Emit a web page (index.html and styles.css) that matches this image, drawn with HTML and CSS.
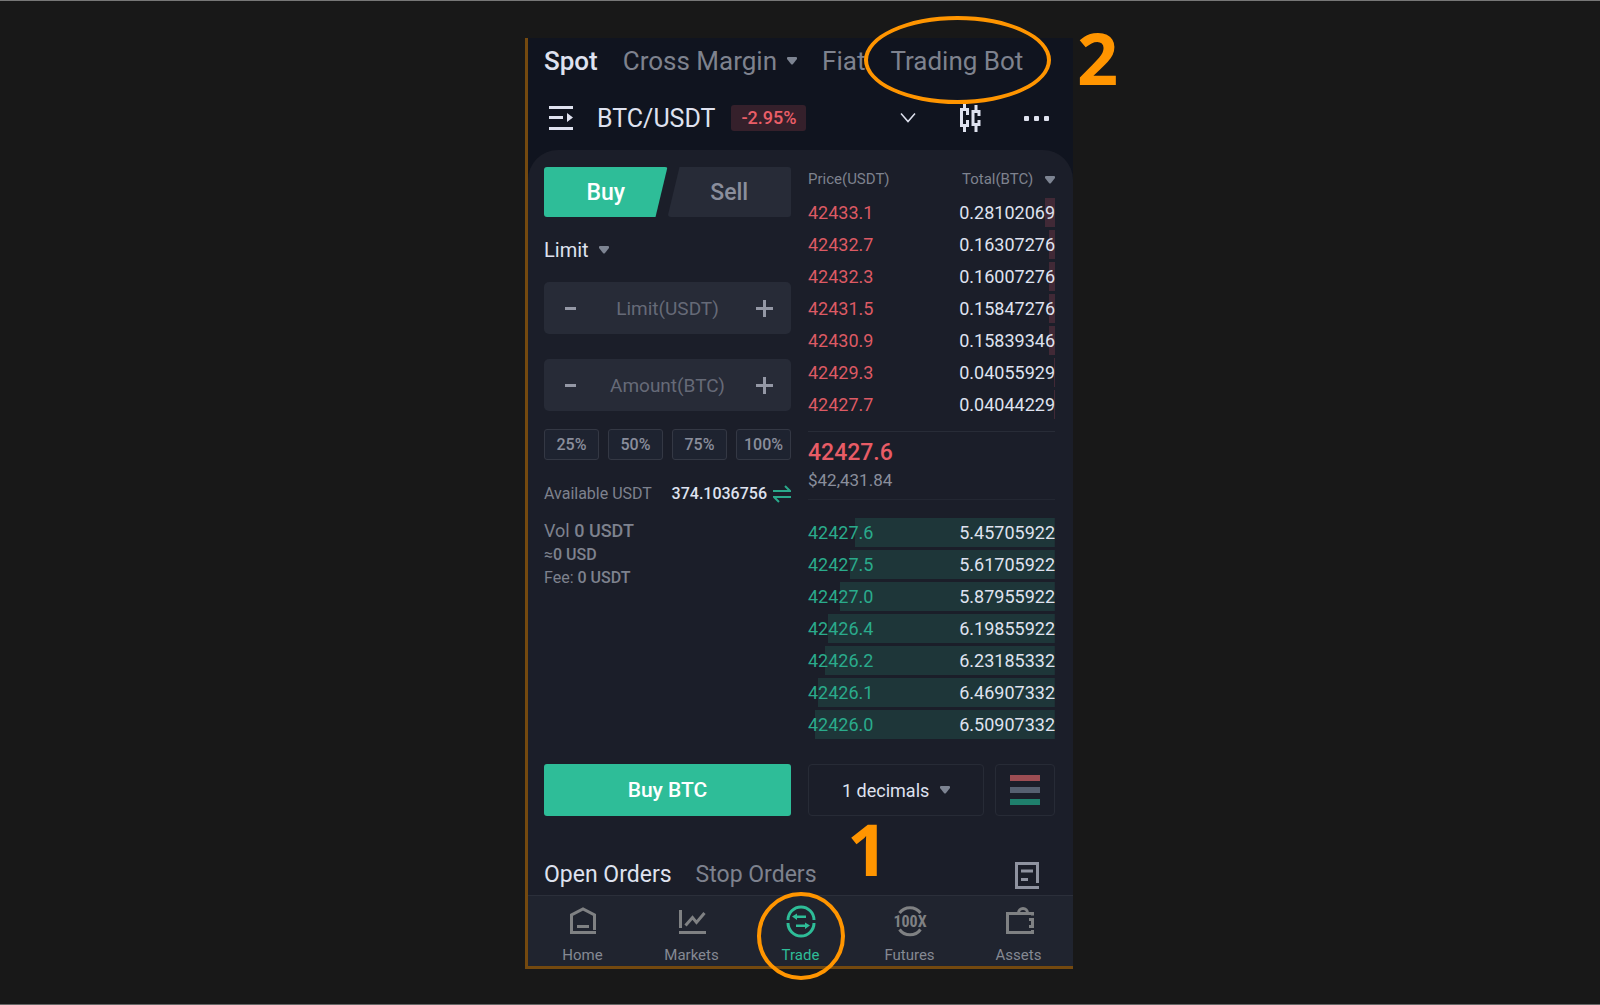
FILE: index.html
```html
<!DOCTYPE html>
<html lang="en">
<head>
<meta charset="utf-8">
<meta name="viewport" content="width=device-width, initial-scale=1">
<title>Spot trading BTC/USDT</title>
<link rel="stylesheet" href="styles.css">
</head>
<body>
<main class="phone">
  <header class="top">
    <nav class="modes" aria-label="Trading modes">
      <a href="#spot" class="mode active">Spot</a>
      <a href="#margin" class="mode">Cross Margin <svg class="caret" viewBox="0 0 10 8" aria-hidden="true"><path d="M1 0h8q1 0 1 1v1L6 7q-1 1-2 0L0 2V1q0-1 1-1z"/></svg></a>
      <a href="#fiat" class="mode">Fiat</a>
      <a href="#bot" class="mode">Trading Bot</a>
    </nav>
    <div class="pair">
      <button class="icon-btn" aria-label="Markets list"><svg width="24" height="24" viewBox="0 0 24 24" fill="currentColor"><path d="M0 0h24v3H0zM0 10h14v3H0zM0 21h24v3H0zM18 7l6 4.500-6 4.500z"/></svg></button>
      <h1 class="pair-name">BTC/USDT</h1>
      <span class="change">-2.95%</span>
      <div class="pair-tools">
        <button class="icon-btn" aria-label="More details"><svg width="16" height="12" viewBox="0 0 16 12" fill="none" stroke="currentColor" stroke-width="1.500"><path d="M1 1.500l7 8 7-8"/></svg></button>
        <button class="icon-btn" aria-label="Chart"><svg width="24" height="28" viewBox="0 0 24 28" fill="none" stroke="currentColor" stroke-width="3"><path d="M6.500 0v6M6.500 21v7M11 5.500H3.500v16H11M9.500 5v6M9.500 16v6M18 1v6M18 21v7M22.500 7.500H15v13h7.500M21 7v5M21 16v5"/></svg></button>
        <button class="icon-btn" aria-label="More"><svg width="26" height="6" viewBox="0 0 26 6" fill="currentColor"><rect x="0" y="1" width="5" height="5" rx="1"/><rect x="10" y="1" width="5" height="5" rx="1"/><rect x="20" y="1" width="5" height="5" rx="1"/></svg></button>
      </div>
    </div>
  </header>

  <section class="panel">
    <div class="columns">
      <form class="ticket">
        <div class="sides">
          <button type="button" class="side buy">Buy</button>
          <button type="button" class="side sell">Sell</button>
        </div>
        <div class="picker order-type">
          <select aria-label="Order type"><option>Limit</option></select>
          <svg class="caret" viewBox="0 0 10 8" aria-hidden="true"><path d="M1 0h8q1 0 1 1v1L6 7q-1 1-2 0L0 2V1q0-1 1-1z"/></svg>
        </div>
        <div class="stepper">
          <button type="button" aria-label="Decrease limit"><svg width="17" height="17" viewBox="0 0 17 17"><path d="M3 7h11v3H3z"/></svg></button>
          <input type="text" placeholder="Limit(USDT)" aria-label="Limit (USDT)">
          <button type="button" aria-label="Increase limit"><svg width="17" height="17" viewBox="0 0 17 17"><path d="M7 0h3v7h7v3h-7v7H7v-7H0V7h7z"/></svg></button>
        </div>
        <div class="stepper">
          <button type="button" aria-label="Decrease amount"><svg width="17" height="17" viewBox="0 0 17 17"><path d="M3 7h11v3H3z"/></svg></button>
          <input type="text" placeholder="Amount(BTC)" aria-label="Amount (BTC)">
          <button type="button" aria-label="Increase amount"><svg width="17" height="17" viewBox="0 0 17 17"><path d="M7 0h3v7h7v3h-7v7H7v-7H0V7h7z"/></svg></button>
        </div>
        <div class="shares">
          <button type="button">25%</button>
          <button type="button">50%</button>
          <button type="button">75%</button>
          <button type="button">100%</button>
        </div>
        <div class="available">
          <span>Available USDT</span>
          <strong>374.1036756</strong>
          <button type="button" class="icon-btn transfer" aria-label="Transfer"><svg width="18" height="18" viewBox="0 0 18 18" fill="none" stroke="currentColor" stroke-width="2"><path d="M0 6h17L12 1M18 12H1l5 5"/></svg></button>
        </div>
        <div class="totals">
          <p class="vol">Vol <b>0 USDT</b></p>
          <p>≈<b>0 USD</b></p>
          <p>Fee: <b>0 USDT</b></p>
        </div>
        <button type="submit" class="submit">Buy BTC</button>
      </form>

      <div class="book">
        <table class="orders asks">
          <thead>
            <tr><th>Price(USDT)</th><th>Total(BTC) <svg class="caret" viewBox="0 0 10 8" aria-hidden="true"><path d="M1 0h8q1 0 1 1v1L6 7q-1 1-2 0L0 2V1q0-1 1-1z"/></svg></th></tr>
          </thead>
          <tbody>
            <tr style="--depth:10px"><td>42433.1</td><td>0.28102069</td></tr>
            <tr style="--depth:6px"><td>42432.7</td><td>0.16307276</td></tr>
            <tr style="--depth:6px"><td>42432.3</td><td>0.16007276</td></tr>
            <tr style="--depth:6px"><td>42431.5</td><td>0.15847276</td></tr>
            <tr style="--depth:6px"><td>42430.9</td><td>0.15839346</td></tr>
            <tr style="--depth:1px"><td>42429.3</td><td>0.04055929</td></tr>
            <tr style="--depth:1px"><td>42427.7</td><td>0.04044229</td></tr>
          </tbody>
        </table>
        <div class="last">
          <p class="last-price">42427.6</p>
          <p class="last-usd">$42,431.84</p>
        </div>
        <table class="orders bids">
          <tbody>
            <tr style="--depth:81%"><td>42427.6</td><td>5.45705922</td></tr>
            <tr style="--depth:83%"><td>42427.5</td><td>5.61705922</td></tr>
            <tr style="--depth:87%"><td>42427.0</td><td>5.87955922</td></tr>
            <tr style="--depth:92%"><td>42426.4</td><td>6.19855922</td></tr>
            <tr style="--depth:93%"><td>42426.2</td><td>6.23185332</td></tr>
            <tr style="--depth:96%"><td>42426.1</td><td>6.46907332</td></tr>
            <tr style="--depth:97%"><td>42426.0</td><td>6.50907332</td></tr>
          </tbody>
        </table>
        <div class="book-options">
          <div class="picker decimals">
            <select aria-label="Price decimals"><option>1 decimals</option></select>
            <svg class="caret" viewBox="0 0 10 8" aria-hidden="true"><path d="M1 0h8q1 0 1 1v1L6 7q-1 1-2 0L0 2V1q0-1 1-1z"/></svg>
          </div>
          <button class="layout-btn" aria-label="Order book layout"><svg width="30" height="30" viewBox="0 0 30 30"><path fill="#9c4d53" d="M0 0h30v6H0z"/><path fill="#566070" d="M0 12h30v6H0z"/><path fill="#1f7f6c" d="M0 24h30v6H0z"/></svg></button>
        </div>
      </div>
    </div>

    <div class="order-tabs">
      <a href="#open" class="active">Open Orders</a>
      <a href="#stop">Stop Orders</a>
      <button class="icon-btn history" aria-label="Order history"><svg width="24" height="27" viewBox="0 0 24 27" fill="none" stroke="currentColor" stroke-width="3"><path d="M22.500 21V1.500h-21v24H24M6 9h12M6 17.500h7"/></svg></button>
    </div>
  </section>

  <nav class="dock" aria-label="Main">
    <a href="#home"><svg width="30" height="30" viewBox="0 0 30 30" fill="none" stroke="currentColor" stroke-width="3"><path d="M28 26.500H3.500V9L15 3l11.500 6v15M9 20.500h12"/></svg>Home</a>
    <a href="#markets"><svg width="30" height="30" viewBox="0 0 30 30" fill="none" stroke="currentColor" stroke-width="3"><path d="M3.500 4v18M2 26.500h27M8.500 19.500l7-8 4 5L27.500 7"/></svg>Markets</a>
    <a href="#trade" class="active"><svg width="30" height="30" viewBox="0 0 30 30" fill="none" stroke="currentColor" stroke-width="3"><path d="M2 14A13 13 0 0 1 28 14M28 17A13 13 0 0 1 2 17"/><path fill="currentColor" stroke="none" d="M11 7.500v2h9v2.500h-9v2L6 10.500zM19 16.500v2h-9V21h9v2l5-3.500z"/></svg>Trade</a>
    <a href="#futures"><svg width="30" height="30" viewBox="0 0 30 30" fill="none" stroke="currentColor" stroke-width="3"><path d="M4.500 7A13 13 0 0 1 25.500 7M25.500 23.500A13 13 0 0 1 4.500 23.500"/><text class="lever" x="15" y="21" text-anchor="middle" fill="currentColor" stroke="none">100X</text></svg>Futures</a>
    <a href="#assets"><svg width="30" height="30" viewBox="0 0 30 30" fill="none" stroke="currentColor" stroke-width="3"><path d="M28.500 9.500V7.500h-25v19h25V24M25 13.500h3.500v7H25M14.500 7a4.500 4.500 0 0 1 9 0"/></svg>Assets</a>
  </nav>

  <div class="ring ring-bot"></div>
  <span class="step step-bot">2</span>
  <div class="ring ring-trade"></div>
  <span class="step step-trade">1</span>
</main>
</body>
</html>
```

FILE: styles.css
```css
* {
  box-sizing: border-box;
}

body {
  margin: 0;
  min-height: 100vh;
  padding: 37px 2px 34px 0;
  background: #181818;
  border-top: 1px solid #777;
  border-bottom: 1px solid #666;
  font-family: Roboto, "Liberation Sans", sans-serif;
  color: #dfe2ef;
}

h1,
p {
  margin: 0;
  font-weight: 400;
}

a {
  color: inherit;
  text-decoration: none;
}

button,
input,
select {
  font: inherit;
  color: inherit;
  background: none;
  border: 0;
  padding: 0;
  margin: 0;
}

svg {
  display: block;
}

.phone {
  position: relative;
  width: 100%;
  max-width: 548px;
  margin: 0 auto;
  background: #10141f;
  border-left: 3px solid #74490f;
  border-bottom: 3px solid #74490f;
}

.caret {
  display: inline-block;
  flex: none;
  width: 10px;
  height: 8px;
  fill: #7d8492;
}

.icon-btn {
  display: flex;
  align-items: center;
  justify-content: center;
}

/* Mode tabs and pair header */
.top {
  padding: 3px 23px 2px 16px;
}

.modes {
  display: flex;
  gap: 25px;
  font-size: 26px;
  line-height: 40px;
  color: #7e828e;
  white-space: nowrap;
}

.mode {
  display: flex;
  align-items: center;
  gap: 10px;
}

.active {
  color: #dfe2ef;
}

.mode.active {
  font-weight: 500;
}

.pair {
  display: flex;
  align-items: center;
  height: 60px;
  margin: 7px 0 0 5px;
}

.pair-name {
  margin-left: 24px;
  font-size: 25px;
}

.change {
  margin-left: 16px;
  width: 75px;
  border-radius: 3px;
  background: #35202b;
  color: #ea5e68;
  font-size: 18px;
  font-weight: 500;
  line-height: 26px;
  text-align: center;
}

.pair-tools {
  display: flex;
  align-items: center;
  gap: 42px;
  margin-left: auto;
}

/* Trading panel */
.panel {
  padding: 17px 18px 0 16px;
  background: #1b1e29;
  border-radius: 30px 30px 0 0;
}

.columns {
  display: grid;
  grid-template-columns: repeat(2, minmax(0, 1fr));
  gap: 17px;
}

.ticket,
.book {
  display: flex;
  flex-direction: column;
}

.sides {
  display: grid;
  grid-template-columns: 1fr 1fr;
  height: 50px;
  font-size: 23px;
  font-weight: 500;
}

.side {
  border-radius: 3px;
}

.buy {
  background: #2ebd98;
  color: #fff;
  clip-path: polygon(0 0, 100% 0, calc(100% - 12px) 100%, 0 100%);
}

.sell {
  background: #272b37;
  color: #8a8e9c;
  clip-path: polygon(12px 0, 100% 0, 100% 100%, 0 100%);
}

.picker {
  display: flex;
  align-items: center;
  gap: 10px;
}

.picker select {
  appearance: none;
}

.order-type {
  height: 65px;
  font-size: 20px;
}

.stepper {
  display: flex;
  align-items: center;
  height: 52px;
  margin-bottom: 25px;
  padding: 0 18px;
  border-radius: 5px;
  background: #272b37;
}

.stepper button {
  flex: none;
}

.stepper svg {
  fill: #9498a5;
}

.stepper input {
  flex: 1;
  min-width: 0;
  font-size: 19px;
  text-align: center;
}

.stepper input::placeholder {
  color: #666a77;
  opacity: 1;
}

.shares {
  display: grid;
  grid-template-columns: repeat(4, 1fr);
  gap: 9px;
  margin-top: -7px;
}

.shares button {
  height: 31px;
  border: 1px solid #343844;
  border-radius: 3px;
  background: #1e2330;
  color: #8a8e9c;
  font-size: 16px;
  font-weight: 500;
}

.available {
  display: flex;
  align-items: center;
  gap: 6px;
  margin-top: 22px;
  font-size: 16px;
  line-height: 24px;
  color: #7e828e;
}

.available strong {
  margin-left: auto;
  color: #dfe2ef;
  font-size: 16px;
  font-weight: 500;
}

.transfer {
  color: #2aa98b;
}

.totals {
  margin-top: 13px;
  color: #7e828e;
  font-size: 16px;
  line-height: 23px;
}

.totals b {
  font-weight: 500;
}

.totals .vol {
  font-size: 18px;
  line-height: 24px;
}

.submit {
  height: 52px;
  margin-top: auto;
  border-radius: 3px;
  background: #2ebd98;
  color: #fff;
  font-size: 21px;
  font-weight: 500;
}

/* Order book */
.orders {
  width: 100%;
  border-collapse: separate;
  border-spacing: 0 3px;
  font-size: 18px;
}

.orders th {
  height: 25px;
  padding: 0;
  color: #7e828e;
  font-size: 15px;
  font-weight: 400;
  line-height: 19px;
  text-align: left;
  vertical-align: top;
}

.orders th .caret {
  margin-left: 8px;
}

.orders td {
  height: 29px;
  padding: 0;
  line-height: 29px;
}

.orders th:last-child,
.orders td:last-child {
  text-align: right;
}

.orders tbody tr {
  background: linear-gradient(var(--bar), var(--bar)) right / var(--depth) 100% no-repeat;
}

.asks {
  --bar: #412936;
}

.bids {
  --bar: #1e3639;
}

.asks td:first-child {
  color: #dd5a64;
}

.bids td:first-child {
  color: #2aab8c;
}

.last {
  margin: 9px 0 15px;
  padding: 7px 0 6px;
  border-top: 1px solid #282c37;
  border-bottom: 1px solid #232732;
}

.last-price {
  color: #e85c66;
  font-size: 23px;
  font-weight: 500;
  line-height: 28px;
}

.last-usd {
  color: #8a8e9c;
  font-size: 17px;
  line-height: 26px;
}

.book-options {
  display: flex;
  gap: 11px;
  margin-top: 22px;
}

.decimals,
.layout-btn {
  display: flex;
  align-items: center;
  justify-content: center;
  height: 52px;
  border: 1px solid #272b36;
  border-radius: 4px;
}

.decimals {
  flex: 1;
  font-size: 18px;
}

.layout-btn {
  width: 60px;
}

.order-tabs {
  display: flex;
  align-items: center;
  gap: 24px;
  padding: 39px 16px 0 0;
  color: #7e828e;
  font-size: 23px;
  line-height: 40px;
}

.order-tabs .active {
  color: #dfe2ef;
}

.history {
  margin-left: auto;
  color: #8f93a0;
}

/* Bottom navigation */
.dock {
  display: grid;
  grid-template-columns: repeat(5, 1fr);
  height: 71px;
  padding-top: 10px;
  border-top: 1px solid #2b2f3a;
  background: #20242f;
  color: #858993;
  font-size: 15px;
  line-height: 20px;
}

.dock a {
  display: flex;
  flex-direction: column;
  align-items: center;
  gap: 9px;
}

.dock svg {
  overflow: visible;
  color: #7f8183;
}

.dock .active,
.dock .active svg {
  color: #2ebd98;
}

.lever {
  font: 700 16px "Liberation Sans Narrow", "Roboto Condensed", "Open Sans Condensed", sans-serif;
}

/* Tutorial markers */
.ring {
  position: absolute;
  border: 4px solid #ff9500;
  border-radius: 50%;
  pointer-events: none;
}

.ring-bot {
  top: -22px;
  left: 336px;
  width: 187px;
  height: 88px;
}

.ring-trade {
  bottom: -14px;
  left: 50%;
  width: 88px;
  height: 88px;
  margin-left: -44px;
}

.step {
  position: absolute;
  color: #ff9500;
  font: 700 72px/72px "Open Sans", sans-serif;
}

.step-bot {
  top: -17px;
  left: 549px;
}

.step-trade {
  bottom: 82px;
  left: 319px;
}
```
